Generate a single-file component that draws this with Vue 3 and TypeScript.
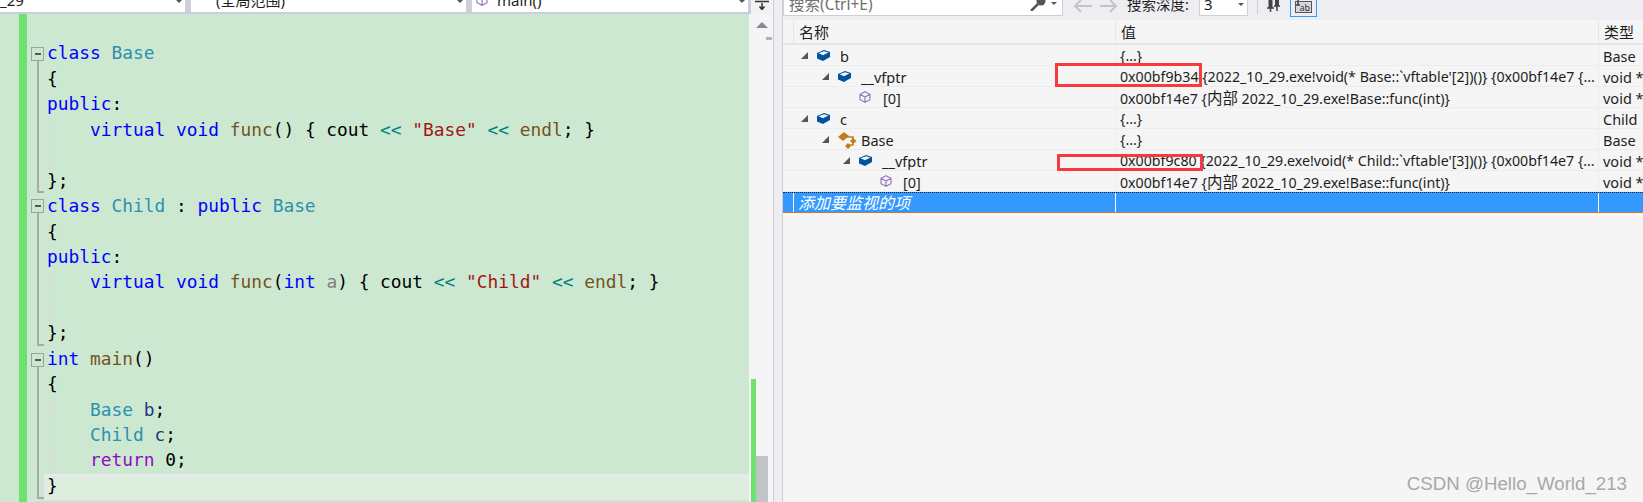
<script setup lang="ts">
interface Tok { t: string; c?: string }
const kw = 'kw', ty = 'ty', fn = 'fn', op = 'op', st = 'st', lo = 'lo', pu = 'pu', ar = 'ar'
const lines: Tok[][] = [
  [],
  [{ t: 'class', c: kw }, { t: ' ' }, { t: 'Base', c: ty }],
  [{ t: '{' }],
  [{ t: 'public', c: kw }, { t: ':' }],
  [{ t: '    ' }, { t: 'virtual', c: kw }, { t: ' ' }, { t: 'void', c: kw }, { t: ' ' }, { t: 'func', c: fn }, { t: '() { cout ' }, { t: '<<', c: op }, { t: ' ' }, { t: '"Base"', c: st }, { t: ' ' }, { t: '<<', c: op }, { t: ' ' }, { t: 'endl', c: fn }, { t: '; }' }],
  [],
  [{ t: '};' }],
  [{ t: 'class', c: kw }, { t: ' ' }, { t: 'Child', c: ty }, { t: ' : ' }, { t: 'public', c: kw }, { t: ' ' }, { t: 'Base', c: ty }],
  [{ t: '{' }],
  [{ t: 'public', c: kw }, { t: ':' }],
  [{ t: '    ' }, { t: 'virtual', c: kw }, { t: ' ' }, { t: 'void', c: kw }, { t: ' ' }, { t: 'func', c: fn }, { t: '(' }, { t: 'int', c: kw }, { t: ' ' }, { t: 'a', c: ar }, { t: ') { cout ' }, { t: '<<', c: op }, { t: ' ' }, { t: '"Child"', c: st }, { t: ' ' }, { t: '<<', c: op }, { t: ' ' }, { t: 'endl', c: fn }, { t: '; }' }],
  [],
  [{ t: '};' }],
  [{ t: 'int', c: kw }, { t: ' ' }, { t: 'main', c: fn }, { t: '()' }],
  [{ t: '{' }],
  [{ t: '    ' }, { t: 'Base', c: ty }, { t: ' ' }, { t: 'b', c: lo }, { t: ';' }],
  [{ t: '    ' }, { t: 'Child', c: ty }, { t: ' ' }, { t: 'c', c: lo }, { t: ';' }],
  [{ t: '    ' }, { t: 'return', c: pu }, { t: ' 0;' }],
  [{ t: '}' }],
]
const folds = [
  { top: 33, h: 146 },
  { top: 185, h: 147 },
  { top: 339, h: 146 },
]
interface Row { indent: number; arrow: boolean; icon: string; name: string; value: string; type: string }
const rows: Row[] = [
  { indent: 0, arrow: true, icon: 'obj', name: 'b', value: '{...}', type: 'Base' },
  { indent: 1, arrow: true, icon: 'obj', name: '__vfptr', value: "0x00bf9b34 {2022_10_29.exe!void(* Base::`vftable'[2])()} {0x00bf14e7 {...", type: 'void *' },
  { indent: 2, arrow: false, icon: 'cube', name: '[0]', value: '0x00bf14e7 {内部 2022_10_29.exe!Base::func(int)}', type: 'void *' },
  { indent: 0, arrow: true, icon: 'obj', name: 'c', value: '{...}', type: 'Child' },
  { indent: 1, arrow: true, icon: 'base', name: 'Base', value: '{...}', type: 'Base' },
  { indent: 2, arrow: true, icon: 'obj', name: '__vfptr', value: "0x00bf9c80 {2022_10_29.exe!void(* Child::`vftable'[3])()} {0x00bf14e7 {...", type: 'void *' },
  { indent: 3, arrow: false, icon: 'cube', name: '[0]', value: '0x00bf14e7 {内部 2022_10_29.exe!Base::func(int)}', type: 'void *' },
]
const parts = (v: string): string[] => v.split(/(内部)/)
</script>

<template>
  <div class="app">
    <section class="left">
      <div class="navbar">
        <div class="combo first"><span class="combo-text">_29</span><i class="caret"></i></div>
        <div class="combo second"><span class="combo-text">(全局范围)</span><i class="caret"></i></div>
        <div class="combo third">
          <svg class="method" width="12" height="12" viewBox="0 0 12 12"><path d="M6 .7 11 3.300V8.700L6 11.300 1 8.700V3.300ZM6 .7V11.300" fill="none" stroke="#9b6fc4" stroke-width="1.200"/></svg>
          <span class="combo-text">main()</span><i class="caret"></i>
        </div>
        <div class="splitbtn"><svg width="14" height="10" viewBox="0 0 14 10"><path d="M0 1.500H14M7 3V9M4.500 6.500 7 9.500 9.500 6.500" fill="none" stroke="#333" stroke-width="1.500"/></svg></div>
      </div>
      <div class="editor-wrap">
        <div class="editor">
          <div class="changebar"></div>
          <div class="current"></div>
          <div v-for="(f, i) in folds" :key="i" class="fold" :style="{ top: f.top + 'px', height: f.h + 'px' }">
            <span class="foldbtn"></span>
          </div>
          <div class="guide g1"></div>
          <div class="guide g2"></div>
          <div class="guide g3"></div>
          <div class="code">
            <div v-for="(l, i) in lines" :key="i" class="cl"><span v-for="(k, j) in l" :key="j" :class="k.c">{{ k.t }}</span></div>
          </div>
        </div>
        <div class="scroll">
          <svg class="up" width="12" height="6" viewBox="0 0 12 6"><path d="M6 0 12 6H0Z" fill="#868999"/></svg>
          <span class="tick"></span>
          <div class="greenmark"></div>
          <div class="thumb"></div>
        </div>
      </div>
    </section>
    <div class="splitter"></div>
    <section class="right">
      <div class="toolbar">
        <div class="search">
          <span class="placeholder">搜索(Ctrl+E)</span>
          <svg class="key" width="16" height="11" viewBox="0 0 16 11"><path d="M1 11 8 4" stroke="#555" stroke-width="2.500" fill="none"/><circle cx="11" cy="1" r="4.500" fill="#555"/></svg>
          <i class="caret small"></i>
        </div>
        <svg class="arrow a1" width="19" height="14" viewBox="0 0 19 14"><path d="M8 1 2 7 8 13M2 7H19" stroke="#c4c4c8" stroke-width="2" fill="none"/></svg>
        <svg class="arrow a2" width="18" height="14" viewBox="0 0 18 14"><path d="M10 1 16 7 10 13M16 7H0" stroke="#c4c4c8" stroke-width="2" fill="none"/></svg>
        <span class="depth-label">搜索深度:</span>
        <div class="depth"><span>3</span><i class="caret"></i></div>
        <span class="sep"></span>
        <svg class="pin" width="14" height="12" viewBox="0 0 14 12"><path d="M3.500 0V8M10 0V6" stroke="#444" stroke-width="4" fill="none"/><path d="M0 8H7M7 6H13M3.500 8V12M10 6V11" stroke="#444" stroke-width="1.500" fill="none"/></svg>
        <div class="tabbtn">
          <svg width="17" height="13" viewBox="0 0 17 13"><rect x=".5" y="1.500" width="16" height="11" fill="#d8d8dc" stroke="#555"/><path d="M3 0V5M1 5H5" stroke="#444" stroke-width="1.500" fill="none"/><text x="4.500" y="10.500" font-size="9" font-family="Noto Sans, sans-serif" fill="#333">ab</text></svg>
        </div>
      </div>
      <div class="grid">
        <div class="head">
          <div class="hc name">名称</div>
          <div class="hc val">值</div>
          <div class="hc typ">类型</div>
        </div>
        <div v-for="(r, i) in rows" :key="i" class="row">
          <div class="c name" :class="'ind' + r.indent">
            <span v-if="r.arrow" class="tri"></span>
            <svg v-if="r.icon === 'obj'" class="ic" width="13" height="11" viewBox="0 0 13 11"><path d="M7 0 13 2V7L6 11 0 8.500V3Z" fill="#00539c"/><path d="M1.500 3.300 7 1.200 11.500 2.600 6 5.200Z" fill="#eef4f8"/></svg>
            <svg v-else-if="r.icon === 'cube'" class="ic cube" width="12" height="12" viewBox="0 0 12 12"><path d="M6 .7 11 3.300V8.700L6 11.300 1 8.700V3.300ZM1 3.300 6 6 11 3.300M6 6V11.300" fill="none" stroke="#9a79bd" stroke-width="1.200"/></svg>
            <svg v-else class="ic base" width="19" height="17" viewBox="0 0 19 17"><path d="M6 0 11 4 5 9 0 5Z" fill="#c27d1a"/><path d="M8 5H15V9M15 9V13H11" fill="none" stroke="#c27d1a" stroke-width="1.600"/><path d="M15 6 18.500 9 15 12 12 9ZM10 11 13 14 10 17 7 14Z" fill="#c27d1a"/></svg>
            <span class="nm">{{ r.name }}</span>
          </div>
          <div class="c val"><span v-for="(p, j) in parts(r.value)" :key="j" :class="{ big: p === '内部' }">{{ p }}</span></div>
          <div class="c typ">{{ r.type }}</div>
        </div>
        <div class="row add">
          <div class="c name"><em>添加要监视的项</em></div>
          <div class="c val"></div>
          <div class="c typ"></div>
        </div>
        <div class="redbox rb1"></div>
        <div class="redbox rb2"></div>
      </div>
      <div class="mark">CSDN @Hello_World_213</div>
    </section>
  </div>
</template>

<style>
html, body { margin: 0; padding: 0; background: #f5f5f5; overflow: hidden; }
</style>

<style scoped>
.app { display: flex; width: 1643px; height: 502px; overflow: hidden; background: #eeeef2; }
.left { width: 773px; height: 502px; display: flex; flex-direction: column; flex: none; }
.navbar { display: flex; height: 14px; background: #ccceDB; flex: none; box-sizing: border-box; padding-bottom: 2px; }
.combo { position: relative; background: #fff; height: 12px; overflow: hidden; font: 15px/12px "Noto Sans", "Noto Sans CJK SC", sans-serif; color: #1e1e1e; }
.combo-text { display: block; margin-top: -7px; line-height: 15px; }
.first { width: 185px; }
.second { width: 275px; margin-left: 6px; padding-left: 25px; box-sizing: border-box; }
.third { width: 276px; margin-left: 6px; padding-left: 25px; box-sizing: border-box; }
.method { position: absolute; left: 4px; top: -6px; }
.caret { position: absolute; right: 3px; top: 0; width: 0; height: 0; border: 3.500px solid transparent; border-top: 3.500px solid #555; border-bottom: 0; }
.splitbtn { width: 22px; height: 14px; background: #f2f2f5; display: flex; justify-content: center; align-items: flex-start; margin-left: 3px; }
.editor-wrap { display: flex; flex: 1; min-height: 0; }
.editor { position: relative; width: 749px; height: 488px; background: #cde8d0; overflow: hidden; flex: none; }
.changebar { position: absolute; left: 19px; top: 0; width: 8px; height: 488px; background: #6ee26e; }
.current { position: absolute; left: 44px; top: 460px; width: 705px; height: 26px; box-sizing: border-box; background: #dceedd; border: 3px solid #e6e9ea; border-bottom-width: 2px; }
.fold { position: absolute; left: 37px; width: 7px; box-sizing: border-box; border-left: 2px solid #a8aaa8; border-bottom: 2px solid #a8aaa8; }
.foldbtn { position: absolute; left: -8px; top: 0; width: 13px; height: 14px; box-sizing: border-box; background: #cde8d0; border: 1px solid #9fa3a0; display: block; }
.foldbtn::after { content: ""; position: absolute; left: 3px; top: 5px; width: 6px; height: 2px; background: #555; }
.guide { position: absolute; left: 50px; width: 0; border-left: 2px dashed #d9dcdb; }
.g1 { top: 107px; height: 48px; }
.g2 { top: 259px; height: 48px; }
.g3 { top: 386px; height: 73px; }
.code { position: absolute; left: 47px; top: 1px; font: 17.850px/25.450px "DejaVu Sans Mono", monospace; color: #000; white-space: pre; }
.cl { height: 25.450px; }
.kw { color: #0000ff; }
.ty { color: #2b91af; }
.fn { color: #74531f; }
.op { color: #008080; }
.st { color: #a31515; }
.lo { color: #1f377f; }
.ar { color: #808080; }
.pu { color: #8f08c4; }
.scroll { position: relative; width: 24px; height: 488px; background: #f5f5f5; flex: none; }
.up { position: absolute; left: 7px; top: 8px; }
.tick { position: absolute; left: 17px; top: 23px; width: 6px; height: 3px; background: #b0b0b8; }
.greenmark { position: absolute; left: 2px; top: 365px; width: 5px; height: 123px; background: #6ee26e; }
.thumb { position: absolute; left: 7px; top: 442px; width: 12px; height: 46px; background: #c2c3c9; }
.splitter { width: 10px; flex: none; height: 502px; box-sizing: border-box; background: #eeeef2; border-left: 1px solid #ccceDB; border-right: 1px solid #ccceDB; }
.right { position: relative; flex: 1; min-width: 0; height: 502px; background: #f5f5f5; display: flex; flex-direction: column; }
.toolbar { height: 20px; display: flex; align-items: flex-start; background: #eeeef2; flex: none; overflow: hidden; }
.search { position: relative; width: 280px; height: 16px; box-sizing: border-box; background: #fff; border: 1px solid #ccceDB; border-top: 0; flex: none; overflow: hidden; }
.placeholder { position: absolute; left: 5px; top: -6px; font: 15.500px/20px "Noto Sans", "Noto Sans CJK SC", sans-serif; color: #717171; }
.key { position: absolute; right: 16px; top: 0; }
.caret.small { right: 5px; top: 2px; }
.arrow { margin-top: -1px; flex: none; }
.a1 { margin-left: 10px; }
.a2 { margin-left: 8px; }
.depth-label { width: 63px; margin-left: 9px; margin-top: -6px; font: 14.500px/20px "Noto Sans", "Noto Sans CJK SC", sans-serif; color: #1e1e1e; white-space: nowrap; flex: none; }
.depth { position: relative; width: 49px; height: 16px; box-sizing: border-box; margin-left: 9px; background: #fff; border: 1px solid #ccceDB; border-top: 0; font: 15px/14px "Noto Sans", sans-serif; padding-left: 4px; color: #1e1e1e; flex: none; overflow: hidden; }
.depth span { display: block; margin-top: -3px; }
.depth .caret { right: 3px; top: 3px; }
.sep { width: 1px; height: 14px; background: #ccceDB; margin-left: 9px; flex: none; }
.pin { margin-left: 9px; flex: none; }
.tabbtn { width: 27px; height: 17px; box-sizing: border-box; margin-left: 9px; border: 1px solid #3399ff; border-top: 0; background: #eeeef2; flex: none; display: flex; justify-content: center; align-items: flex-start; }
.grid { position: relative; font: 14.500px/20px "Noto Sans", "Noto Sans CJK SC", sans-serif; color: #1e1e1e; }
.head { display: grid; grid-template-columns: 10px 322px 483px 1fr; height: 25px; border-bottom: 2px solid #e6e6e9; box-sizing: border-box; font-size: 15px; }
.hc { border-left: 1px solid #e6e6e9; padding-left: 5px; line-height: 24px; }
.hc.name { grid-column: 2; }
.row { display: grid; grid-template-columns: 332px 483px 1fr; height: 21px; box-sizing: border-box; border-bottom: 1px solid #ececee; }
.c { padding-left: 4px; white-space: nowrap; overflow: hidden; border-left: 1px solid #ececee; line-height: 22px; box-sizing: border-box; }
.c.val { padding-left: 4px; font-size: 14.200px; }
.big { font-size: 15.500px; }
.c.name { padding-left: 0; border-left: 0; position: relative; }
.tri { position: absolute; width: 0; height: 0; border-style: solid; border-width: 0 0 7px 7px; border-color: transparent transparent #555 transparent; top: 7px; }
.ic { position: absolute; top: 5px; }
.nm { position: absolute; top: 0; }
.ind0 .tri { left: 18px; } .ind0 .ic { left: 34px; } .ind0 .nm { left: 57px; }
.ind1 .tri { left: 39px; } .ind1 .ic { left: 55px; } .ind1 .nm { left: 78px; }
.ind2 .tri { left: 60px; } .ind2 .ic { left: 76px; } .ind2 .nm { left: 99px; }
.ind3 .ic { left: 97px; } .ind3 .nm { left: 120px; }
.ind2 .ic.cube + .nm { left: 100px; }
.ic.cube { top: 4px; }
.ic.base { left: 55px; top: 3px; }
.add { background: #3399ff; color: #fff; height: 21px; border-top: 1px dotted #222; border-bottom: 1px solid #c87a2a; }
.add .c { border-left: 0; }
.add .c.val, .add .c.typ { border-left: 1px solid #fff; }
.add em { font-style: italic; font-size: 16px; position: absolute; left: 15px; top: 0; line-height: 21px; }
.add .c.name::before { content: ""; position: absolute; left: 10px; top: 0; height: 100%; border-left: 1px solid #fff; }
.redbox { position: absolute; box-sizing: border-box; border: 3px solid #f83a3e; }
.rb1 { left: 272px; top: 43px; width: 147px; height: 24px; }
.rb2 { left: 274px; top: 134px; width: 146px; height: 17px; }
.mark { position: absolute; right: 16px; bottom: 8px; font: 18.700px/20px "Liberation Sans", sans-serif; color: #a8a8a8; }
</style>
